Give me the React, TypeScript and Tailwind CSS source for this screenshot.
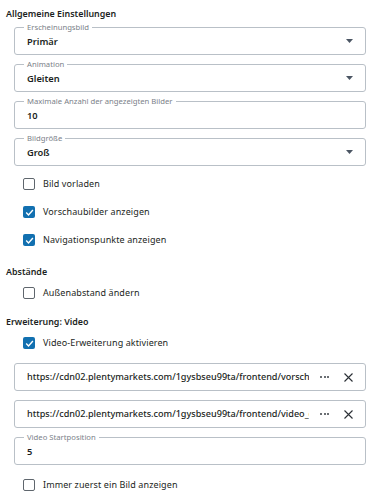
import React, { useState } from 'react';

const font = { fontFamily: '"Noto Sans", "Liberation Sans", sans-serif' };

function Caret() {
  return (
    <svg width="7" height="4" viewBox="0 0 7 4" className="shrink-0">
      <path d="M0 0 L7 0 L3.5 4 Z" fill="#4b5563" />
    </svg>
  );
}

function Field({ label, value, select }: { label?: string; value: string; select?: boolean }) {
  return (
    <div className="relative h-[28px] rounded-[3px] border border-[#b9c0c7] flex items-center pl-[12px] pr-[12px]">
      {label && (
        <span className="absolute -top-[6px] left-[9px] bg-white px-[3px] text-[7.7px] leading-[10px] text-[#7b8189]">
          {label}
        </span>
      )}
      <span className="flex-1 text-[9.3px] font-semibold text-[#1c1f23] mt-[2px]">{value}</span>
      {select && <Caret />}
    </div>
  );
}

function UrlField({ value }: { value: string }) {
  return (
    <div className="h-[28px] rounded-[3px] border border-[#b9c0c7] flex items-center pl-[12px] pr-[12px]">
      <span className="w-[282px] overflow-hidden whitespace-nowrap text-[9.1px] font-medium text-[#1c1f23]">{value}</span>
      <span className="ml-[11px] flex gap-[1.5px]">
        <i className="block w-[2px] h-[2px] rounded-full bg-[#3a3f45]" />
        <i className="block w-[2px] h-[2px] rounded-full bg-[#3a3f45]" />
        <i className="block w-[2px] h-[2px] rounded-full bg-[#3a3f45]" />
      </span>
      <svg width="9" height="9" viewBox="0 0 9 9" className="ml-auto">
        <path d="M0.5 0.5 L8.5 8.5 M8.5 0.5 L0.5 8.5" stroke="#2b3036" strokeWidth="1.1" />
      </svg>
    </div>
  );
}

function Check({ label, checked: initial, tall }: { label: string; checked?: boolean; tall?: boolean }) {
  const [checked, setChecked] = useState(!!initial);
  return (
    <label className={`flex items-center pl-[23px] cursor-pointer ${tall ? 'h-[28px]' : 'h-[22px]'}`}>
      <span
        onClick={() => setChecked(!checked)}
        className={`w-[12px] h-[12px] rounded-[2px] flex items-center justify-center ${
          checked ? 'bg-[#1270b0]' : 'border-[1.5px] border-[#5f666d]'
        }`}
      >
        {checked && (
          <svg width="9" height="9" viewBox="0 0 9 9">
            <path d="M1.2 4.6 L3.5 6.9 L7.9 2" stroke="white" strokeWidth="1.4" fill="none" />
          </svg>
        )}
      </span>
      <span className="ml-[8px] text-[9px] tracking-[0.1px] text-[#1c1f23]">{label}</span>
    </label>
  );
}

function Heading({ children }: { children: React.ReactNode }) {
  return <h2 className="h-[20px] flex items-center pl-[6px] text-[8.9px] font-semibold text-[#1c1f23]">{children}</h2>;
}

export default function App() {
  return (
    <div className="w-[389px] h-[500px] bg-white pt-[4px] overflow-hidden" style={font}>
      <Heading>Allgemeine Einstellungen</Heading>
      <div className="pl-[14px] pr-[23px] mt-[3px] flex flex-col gap-[9px]">
        <Field label="Erscheinungsbild" value="Primär" select />
        <Field label="Animation" value="Gleiten" select />
        <Field label="Maximale Anzahl der angezeigten Bilder" value="10" />
        <Field label="Bildgröße" value="Groß" select />
      </div>
      <div className="mt-[4px]">
        <Check label="Bild vorladen" tall />
        <Check label="Vorschaubilder anzeigen" checked tall />
        <Check label="Navigationspunkte anzeigen" checked tall />
      </div>
      <div className="mt-[8px]">
        <Heading>Abstände</Heading>
        <Check label="Außenabstand ändern" />
      </div>
      <div className="mt-[8px]">
        <Heading>Erweiterung: Video</Heading>
        <Check label="Video-Erweiterung aktivieren" checked />
      </div>
      <div className="pl-[14px] pr-[23px] mt-[9px] flex flex-col gap-[9px]">
        <UrlField value="https://cdn02.plentymarkets.com/1gysbseu99ta/frontend/vorschaubild.jpg" />
        <UrlField value="https://cdn02.plentymarkets.com/1gysbseu99ta/frontend/video_clip.mp4" />
        <Field label="Video Startposition" value="5" />
      </div>
      <div className="mt-[9px]">
        <Check label="Immer zuerst ein Bild anzeigen" />
      </div>
    </div>
  );
}
